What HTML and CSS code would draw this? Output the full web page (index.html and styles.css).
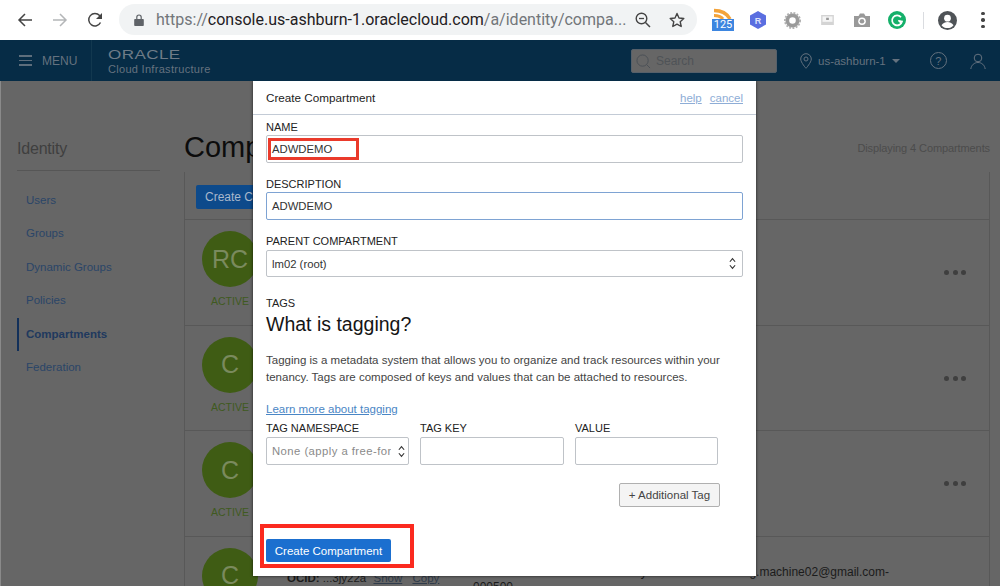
FILE: index.html
```html
<!DOCTYPE html>
<html lang="en">
<head>
<meta charset="utf-8">
<title>Create Compartment</title>
<link rel="stylesheet" href="styles.css">
</head>
<body>
<header class="toolbar">
  <svg class="tb-btn" viewBox="0 0 16 16"><path d="M15 8H2M8 2L2 8l6 6" fill="none" stroke="#444" stroke-width="1.5"/></svg>
  <svg class="tb-btn" viewBox="0 0 16 16"><path d="M1 8h13M8 2l6 6-6 6" fill="none" stroke="#b4b6b8" stroke-width="1.5"/></svg>
  <svg class="tb-btn" viewBox="0 0 16 16"><path d="M13.5 10.5A6.2 6.2 0 1 1 12.6 3.6L14.5 5.5" fill="none" stroke="#444" stroke-width="1.5"/><path d="M15 1v6H9z" fill="#444"/></svg>
  <div class="omnibox">
    <svg class="lock" viewBox="0 0 10 12"><path d="M1 5h8a.8.8 0 0 1 .8.8v5.4a.8.8 0 0 1-.8.8H1a.8.8 0 0 1-.8-.8V5.800A.8.8 0 0 1 1 5z" fill="#5f6368"/><path d="M2.800 5V3.200a2.200 2.200 0 0 1 4.400 0V5" fill="none" stroke="#5f6368" stroke-width="1.200"/></svg>
    <span class="url"><span class="url-dim">https://</span>console.us-ashburn-1.oraclecloud.com<span class="url-dim">/a/identity/compa...</span></span>
    <svg class="omni-icon zoom-icon" viewBox="0 0 16 16"><circle cx="6.500" cy="6.500" r="5.300" fill="none" stroke="#444" stroke-width="1.400"/><path d="M10.500 10.500L15 15" stroke="#444" stroke-width="1.500"/><path d="M4 6.500h5" stroke="#444" stroke-width="1.300"/></svg>
    <svg class="omni-icon star-icon" viewBox="0 0 16 16"><path d="M8 1.500l2 4.500 4.800.5-3.600 3.200 1 4.800L8 12.100l-4.200 2.400 1-4.800L1.200 6.500 6 6z" fill="none" stroke="#444" stroke-width="1.400" stroke-linejoin="round"/></svg>
  </div>
  <div class="extensions">
    <div class="ext-rss">
      <svg class="rss-arcs" viewBox="0 0 20 11"><path d="M1 2.500c7 0 13 3 16 8.500" fill="none" stroke="#f3a33a" stroke-width="3.500"/><path d="M1 7.500c4 0 7 1 9 3.500" fill="none" stroke="#f3a33a" stroke-width="3"/></svg>
      <span class="rss-badge">125</span>
    </div>
    <svg class="ext ext-r" viewBox="0 0 16 18"><path d="M8 0l8 4.500v9L8 18l-8-4.500v-9z" fill="#5a6ee0"/><text x="8" y="12.500" class="ext-r-text">R</text></svg>
    <svg class="ext ext-gear" viewBox="0 0 18 18"><circle cx="9" cy="9" r="5.500" fill="none" stroke="#9a9a9a" stroke-width="4"/><circle cx="9" cy="9" r="8" fill="none" stroke="#b0b0b0" stroke-width="2" stroke-dasharray="2 1.500"/></svg>
    <svg class="ext ext-screen" viewBox="0 0 14 11"><path d="M0 0h14v11H0z" fill="#d4d4d4"/><path d="M1.500 1.500h11v6h-11z" fill="#f5f5f5"/><path d="M5.500 3h3v2.500h-3z" fill="#999"/></svg>
    <svg class="ext ext-camera" viewBox="0 0 16 14"><path d="M0 3h4.500L6 .5h4L11.500 3H16v11H0z" fill="#999"/><circle cx="8" cy="8.200" r="3.800" fill="#fff"/><circle cx="8" cy="8.200" r="2.300" fill="#999"/></svg>
    <svg class="ext ext-g" viewBox="0 0 18 18"><circle cx="9" cy="9" r="9" fill="#15b06a"/><path d="M13 6.200A5 5 0 1 0 14 10.500l-3.500-.5" fill="none" stroke="#fff" stroke-width="1.700"/><path d="M9.700 8.800l3.800 1.200-.6 3.500z" fill="#fff"/></svg>
    <span class="tb-sep"></span>
    <svg class="ext ext-profile" viewBox="0 0 18 18"><circle cx="9" cy="9" r="9" fill="#4f5357"/><circle cx="9" cy="6.800" r="3.200" fill="#fff"/><path d="M3.300 13.500c1.500-2.300 3.700-3 5.700-3s4.200.7 5.700 3c-1.400 1.800-3.400 2.700-5.700 2.700s-4.300-.9-5.700-2.700z" fill="#fff"/></svg>
    <span class="kebab"><i></i><i></i><i></i></span>
  </div>
</header>

<nav class="navbar">
  <div class="menu">
    <span class="burger"><i></i><i></i><i></i></span>
    <span class="menu-label">MENU</span>
  </div>
  <div class="brand">
    <span class="brand-oracle">ORACLE</span>
    <span class="brand-cloud">Cloud Infrastructure</span>
  </div>
  <div class="search">
    <svg class="search-icon" viewBox="0 0 16 16"><circle cx="7" cy="7" r="6" fill="none" stroke="#4a4f55" stroke-width="1"/><path d="M11.500 11.500L15 15" stroke="#4a4f55"/></svg>
    <span>Search</span>
  </div>
  <div class="region">
    <svg class="pin" viewBox="0 0 12 16"><path d="M6 .7a5.300 5.300 0 0 1 5.300 5.300C11.300 9.500 6 15.300 6 15.300S.7 9.500.7 6A5.300 5.300 0 0 1 6 .7z" fill="none" stroke="#65727f"/><circle cx="6" cy="6" r="2" fill="none" stroke="#65727f"/></svg>
    <span>us-ashburn-1</span>
    <span class="caret"></span>
  </div>
  <span class="help">?</span>
  <svg class="user" viewBox="0 0 16 16"><circle cx="8" cy="5" r="3.800" fill="none" stroke="#65727f"/><path d="M.8 16c.6-4 3.500-6.500 7.200-6.500s6.600 2.500 7.200 6.500" fill="none" stroke="#65727f"/></svg>
</nav>

<div class="stage">
  <aside class="sidebar">
    <h2 class="side-title">Identity</h2>
    <ul class="side-list">
      <li>Users</li>
      <li>Groups</li>
      <li>Dynamic Groups</li>
      <li>Policies</li>
      <li class="active">Compartments</li>
      <li>Federation</li>
    </ul>
  </aside>
  <main class="content">
    <div class="page-head">
      <h1>Compartments</h1>
      <span class="count">Displaying 4 Compartments</span>
    </div>
    <section class="card">
      <div class="card-top"><span class="primary-dim">Create Compartment</span></div>
      <div class="row">
        <div class="status"><span class="avatar">RC</span><span class="state">ACTIVE</span></div>
        <span class="dots"><i></i><i></i><i></i></span>
      </div>
      <div class="row">
        <div class="status"><span class="avatar">C</span><span class="state">ACTIVE</span></div>
        <span class="dots"><i></i><i></i><i></i></span>
      </div>
      <div class="row">
        <div class="status"><span class="avatar">C</span><span class="state">ACTIVE</span></div>
        <span class="dots"><i></i><i></i><i></i></span>
      </div>
      <div class="row">
        <div class="status"><span class="avatar">C</span></div>
        <div class="row-info">
          <span class="ocid"><b>OCID:</b> ...3jy22a <u>Show</u> <u>Copy</u></span>
          <span class="owner"><span class="owner-line">oracleidentitycloudservice/training.machine02@gmail.com-</span><span class="owner-id">000500</span></span>
        </div>
      </div>
    </section>
  </main>

  <div class="dialog">
    <div class="dialog-head">
      <span class="dialog-title">Create Compartment</span>
      <span class="dialog-links"><a>help</a><a>cancel</a></span>
    </div>
    <form class="dialog-body">
      <label class="lbl">NAME</label>
      <div class="field">ADWDEMO</div>
      <label class="lbl">DESCRIPTION</label>
      <div class="field field-focus">ADWDEMO</div>
      <label class="lbl">PARENT COMPARTMENT</label>
      <div class="field field-select field-parent">lm02 (root)
        <svg class="updown" viewBox="0 0 8 14"><path d="M1 5l3-3.500L7 5M1 9l3 3.500L7 9" fill="none" stroke="#333" stroke-width="1.300"/></svg>
      </div>
      <label class="lbl lbl-tags">TAGS</label>
      <h3 class="tag-title">What is tagging?</h3>
      <p class="tag-text">Tagging is a metadata system that allows you to organize and track resources within your tenancy. Tags are composed of keys and values that can be attached to resources.</p>
      <a class="learn">Learn more about tagging</a>
      <div class="tag-grid">
        <div class="tag-col">
          <label class="lbl">TAG NAMESPACE</label>
          <div class="field field-select field-ns"><span class="ns-text">None (apply a free-form tag)</span>
            <svg class="updown" viewBox="0 0 8 14"><path d="M1 5l3-3.500L7 5M1 9l3 3.500L7 9" fill="none" stroke="#333" stroke-width="1.300"/></svg>
          </div>
        </div>
        <div class="tag-col">
          <label class="lbl">TAG KEY</label>
          <div class="field"></div>
        </div>
        <div class="tag-col">
          <label class="lbl">VALUE</label>
          <div class="field"></div>
        </div>
      </div>
      <div class="add-row"><span class="add-tag">+ Additional Tag</span></div>
      <div class="submit-row"><span class="submit">Create Compartment</span></div>
    </form>
    <span class="mark mark-name"></span>
    <span class="mark mark-submit"></span>
  </div>
</div>
</body>
</html>
```
FILE: styles.css
```css
* { box-sizing: border-box; }
html, body { margin: 0; height: 586px; overflow: hidden; }
body { font-family: "Liberation Sans", Arial, sans-serif; background: #666; color: #222; }
i { display: block; }

/* browser toolbar */
.toolbar { height: 40px; background: #fff; display: flex; align-items: center; padding-left: 17px; }
.tb-btn { width: 16px; height: 16px; margin-right: 19px; }
.tb-btn:nth-child(3) { margin-right: 16px; }
.omnibox { width: 578px; height: 31px; margin-top: -1px; background: #f1f3f4; border-radius: 16px; display: flex; align-items: center; padding-left: 15px; }
.lock { width: 10px; height: 12px; flex: none; }
.url { font-family: Roboto, sans-serif; font-size: 16px; color: #1f2023; margin-left: 12px; width: 458px; white-space: nowrap; }
.url-dim { color: #72767a; }
.omni-icon { width: 16px; height: 16px; flex: none; }
.zoom-icon { margin-left: 21px; }
.star-icon { margin-left: 18px; }
.extensions { display: flex; align-items: center; margin-left: 15px; }
.ext-rss { width: 22px; height: 29px; display: flex; flex-direction: column; align-items: center; margin-top: 5px; }
.rss-arcs { width: 20px; height: 11px; flex: none; }
.rss-badge { background: #3d86e0; color: #fff; font-size: 11px; line-height: 12px; width: 22px; text-align: center; font-family: Roboto, sans-serif; }
.ext { flex: none; }
.ext-r { width: 16px; height: 18px; margin-left: 16px; }
.ext-r-text { font: bold 9px "Liberation Sans", sans-serif; fill: #dfe3fb; text-anchor: middle; }
.ext-gear { width: 17px; height: 17px; margin-left: 18px; }
.ext-screen { width: 13px; height: 10px; margin-left: 20px; }
.ext-camera { width: 16px; height: 14px; margin-left: 20px; }
.ext-g { width: 18px; height: 18px; margin-left: 18px; }
.tb-sep { width: 1px; height: 17px; background: #dadce0; margin-left: 17px; }
.ext-profile { width: 19px; height: 19px; margin-left: 14px; }
.kebab { display: flex; flex-direction: column; gap: 3px; margin-left: 24px; }
.kebab i { width: 3.500px; height: 3.500px; border-radius: 50%; background: #444; }

/* console nav */
.navbar { height: 41px; background: #062c46; display: flex; align-items: center; color: #65727f; font-size: 12px; }
.menu { width: 92px; height: 100%; display: flex; align-items: center; padding-left: 19px; border-right: 1px solid #12384f; }
.burger { display: flex; flex-direction: column; gap: 3px; width: 13px; }
.burger i { height: 1.500px; background: #5d6e7c; }
.menu-label { margin-left: 10px; font-size: 12px; }
.brand { width: 103px; display: flex; flex-direction: column; margin-left: 16px; padding-top: 3px; }
.brand-oracle { font-size: 12px; line-height: 13px; letter-spacing: .3px; transform: scaleX(1.420); transform-origin: left; color: #6f7c88; }
.brand-cloud { font-size: 11px; line-height: 14px; letter-spacing: .3px; white-space: nowrap; }
.search { width: 146px; height: 24px; margin-left: 420px; margin-top: 1px; background: #666; border: 1px solid #56606a; border-radius: 2px; display: flex; align-items: center; padding-left: 4px; color: #4f5357; font-size: 12px; }
.search-icon { width: 15px; height: 15px; margin-right: 5px; }
.region { display: flex; align-items: center; margin-left: 23px; font-size: 11.500px; }
.pin { width: 12px; height: 16px; margin-right: 6px; }
.caret { width: 0; height: 0; margin-left: 6px; border: 4px solid transparent; border-top: 4px solid #65727f; border-bottom: 0; }
.help { width: 17px; height: 17px; margin-left: 30px; border: 1px solid #65727f; border-radius: 50%; display: flex; align-items: center; justify-content: center; font-size: 11px; }
.user { width: 16px; height: 16px; margin-left: 23px; }

/* page behind dialog */
.stage { position: relative; height: 505px; overflow: hidden; display: flex; border-left: 1px solid #8a8a8a; }
.sidebar { width: 183px; flex: none; padding: 57px 0 0 16px; }
.side-title { margin: 0; width: 143px; height: 33px; border-bottom: 1px solid #565656; font-size: 16px; font-weight: 400; color: #3f3f3f; line-height: 22px; letter-spacing: -.2px; }
.side-list { list-style: none; margin: 12.500px 0 0; padding: 0; width: 143px; }
.side-list li { height: 33.500px; line-height: 33.500px; padding-left: 9px; font-size: 11.500px; color: #2a4568; }
.side-list .active { font-weight: 700; border-left: 2px solid #12305a; padding-left: 7px; color: #20395e; }
.content { flex: 1; padding-right: 10px; min-width: 0; }
.page-head { height: 91px; display: flex; align-items: center; justify-content: space-between; padding-top: 41px; white-space: nowrap; }
.page-head h1 { margin: 0; font-size: 29px; font-weight: 400; color: #0c0c0c; }
.count { font-size: 11px; color: #4c4c4c; margin-top: 2px; letter-spacing: -.1px; }
.card { border: 1px solid #585858; border-bottom: 0; border-top: 0; }
.card-top { height: 48px; padding: 13px 0 0 11px; border-bottom: 1px solid #585858; }
.primary-dim { display: inline-block; height: 24px; padding: 0 9px; line-height: 24px; background: #0d4a8b; border-radius: 2px; font-size: 12px; color: #a9b8cb; white-space: nowrap; }
.row { height: 105.500px; display: flex; justify-content: space-between; padding: 11px 23px 0 17px; border-bottom: 1px solid #585858; }
.status { width: 56px; display: flex; flex-direction: column; align-items: center; }
.avatar { width: 56px; height: 56px; flex: none; border-radius: 50%; background: #3f5c14; color: #7a8a5e; display: flex; align-items: center; justify-content: center; font-size: 25px; }
.state { margin-top: 8px; font-size: 10.500px; color: #3f5a20; }
.dots { display: flex; gap: 3.500px; margin-top: 39px; }
.dots i { width: 5px; height: 5px; border-radius: 50%; background: #3f3f3f; }
.row-info { flex: 1; display: flex; justify-content: space-between; padding-left: 29px; padding-right: 77px; font-size: 11.500px; color: #1b1b1b; }
.ocid { margin-top: 24px; white-space: nowrap; }
.ocid u { margin-left: 4px; color: #2f3b4a; }
.ocid u + u { margin-left: 7px; }
.owner { width: 416px; white-space: nowrap; font-size: 12px; line-height: 15px; margin-top: 17px; }
.owner-line { display: block; text-align: right; }
.owner-id { display: block; }

/* dialog */
.dialog { position: absolute; left: 252px; top: 0; width: 503px; height: 495px; background: #fff; box-shadow: 0 0 3px rgba(0, 0, 0, .7); }
.dialog-head { height: 34px; border-bottom: 1px solid #c3cbd6; padding: 0 13px; display: flex; align-items: center; justify-content: space-between; font-size: 11.700px; color: #222; }
.dialog-links { display: flex; gap: 8px; color: #8eadd6; font-size: 11.500px; }
.dialog-links a { text-decoration: underline; }
.dialog-body { padding: 5px 13px 0; }
.lbl { display: block; font-size: 11px; line-height: 14px; color: #222; }
.field { height: 28px; border: 1px solid #bfc3c8; border-radius: 2px; background: #fff; font-size: 11.300px; color: #333; padding-left: 5px; display: flex; align-items: center; margin-top: 1px; margin-bottom: 14px; }
.field-focus { border-color: #7ea3d3; }
.field-select { justify-content: space-between; padding-right: 6px; margin-bottom: 0; }
.field-parent { height: 27px; margin-top: 2px; }
.updown { width: 7px; height: 13px; flex: none; }
.lbl-tags { margin-top: 19px; }
.tag-title { margin: 2px 0 0; font-size: 19.500px; font-weight: 400; line-height: 24px; color: #151515; }
.tag-text { margin: 16px 0 0; width: 470px; font-size: 11.500px; line-height: 17px; color: #444; }
.learn { display: block; margin-top: 16px; font-size: 11.500px; line-height: 14px; color: #4a86c5; text-decoration: underline; }
.tag-grid { display: grid; grid-template-columns: 143px 144px 143px; gap: 11px; margin-top: 5px; }
.tag-grid .field { margin-top: 2px; margin-bottom: 0; }
.ns-text { overflow: hidden; white-space: nowrap; color: #8a8a8a; width: 119px; letter-spacing: .45px; }
.field-ns { padding-right: 3px; }
.add-row { display: flex; justify-content: flex-end; margin-top: 18px; padding-right: 23px; }
.add-tag { width: 101px; height: 24px; border: 1px solid #b0b0b0; border-radius: 2px; background: #f4f4f4; font-size: 11.500px; color: #444; display: flex; align-items: center; justify-content: center; }
.submit-row { margin-top: 32px; }
.submit { display: inline-flex; width: 125px; height: 23px; background: #1b6fcf; border-radius: 2px; color: #fff; font-size: 11.500px; align-items: center; justify-content: center; }
.mark { position: absolute; }
.mark-name { left: 15px; top: 57px; width: 91px; height: 22px; border: 3px solid #ea3a2b; }
.mark-submit { left: 7px; top: 443px; width: 154px; height: 44px; border: 4px solid #fb2a1f; }
```
